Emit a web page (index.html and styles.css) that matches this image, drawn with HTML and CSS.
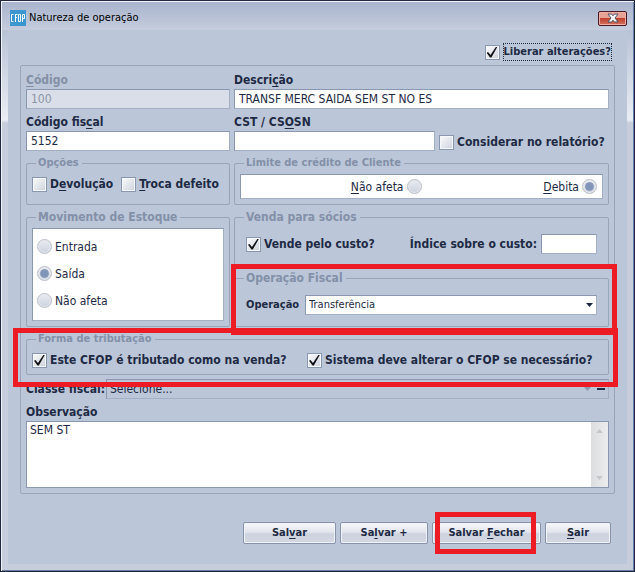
FILE: index.html
```html
<!DOCTYPE html>
<html lang="pt-BR">
<head>
<meta charset="utf-8">
<title>Natureza de operação</title>
<link rel="stylesheet" href="styles.css">
</head>
<body>
<main class="window">
  <header class="titlebar">
    <svg class="app-icon" viewBox="0 0 16 16" aria-hidden="true">
      <rect width="16" height="16" fill="#3b97cf"/>
      <path d="M3.5 4.5H1.5V11.5H3.5M5.5 12V4.5H7.500M5.500 7.500H7M9.500 4.500H10.500V11.500H8.500V4.500ZM12.500 12V4.500H14.500V8.500H12.500" fill="none" stroke="#fff"/>
    </svg>
    <h1 class="title">Natureza de operação</h1>
    <button class="close" type="button" aria-label="Fechar janela">
      <svg viewBox="0 0 12 10" aria-hidden="true">
        <path d="M1 1H4.500L6 2.800L7.500 1H11L8 5L11 9H7.500L6 7.200L4.500 9H1L4 5Z" fill="#fff" stroke="#4d5268"/>
      </svg>
    </button>
  </header>

  <form class="client">
    <div class="unlock">
      <label class="option strong"><input class="tick" type="checkbox" checked><span class="focus">Liberar alterações?</span></label>
    </div>

    <div class="panel">
      <div class="split">
        <div class="field">
          <label class="caption muted" for="codigo"><u>C</u>ódigo</label>
          <input class="text" id="codigo" type="text" value="100" disabled>
        </div>
        <div class="field">
          <label class="caption" for="descricao">Descri<u>ç</u>ão</label>
          <input class="text" id="descricao" type="text" value="TRANSF MERC SAIDA SEM ST NO ES">
        </div>
      </div>

      <div class="split">
        <div class="field">
          <label class="caption" for="fiscal">Código fis<u>c</u>al</label>
          <input class="text" id="fiscal" type="text" value="5152">
        </div>
        <div class="cst">
          <div class="field">
            <label class="caption" for="cst">CST / CS<u>O</u>SN</label>
            <input class="text" id="cst" type="text">
          </div>
          <label class="option strong"><input class="tick" type="checkbox"><span>Considerar no relatório?</span></label>
        </div>
      </div>

      <div class="split">
        <fieldset class="group">
          <legend class="compact">Opções</legend>
          <div class="pair">
            <label class="option strong"><input class="tick" type="checkbox"><span>D<u>e</u>volução</span></label>
            <label class="option strong"><input class="tick" type="checkbox"><span><u>T</u>roca defeito</span></label>
          </div>
        </fieldset>
        <fieldset class="group">
          <legend class="compact">Limite de crédito de Cliente</legend>
          <div class="well credit">
            <label class="option"><span><u>N</u>ão afeta</span><input class="dot" type="radio" name="limite"></label>
            <label class="option"><span><u>D</u>ebita</span><input class="dot" type="radio" name="limite" checked></label>
          </div>
        </fieldset>
      </div>

      <div class="split">
        <fieldset class="group">
          <legend>Movimento de Estoque</legend>
          <div class="well stock">
            <label class="option"><input class="dot" type="radio" name="estoque"><span>Entrada</span></label>
            <label class="option"><input class="dot" type="radio" name="estoque" checked><span>Saída</span></label>
            <label class="option"><input class="dot" type="radio" name="estoque"><span>Não afeta</span></label>
          </div>
        </fieldset>
        <div class="stack">
          <fieldset class="group">
            <legend>Venda para sócios</legend>
            <div class="line">
              <label class="option strong"><input class="tick" type="checkbox" checked><span>Vende pelo custo?</span></label>
              <span class="index">
                <label class="caption" for="indice">Índice sobre o custo:</label>
                <input class="text short" id="indice" type="text">
              </span>
            </div>
          </fieldset>
          <div class="marked mark-operation">
            <fieldset class="group">
              <legend>Operação Fiscal</legend>
              <div class="line">
                <label class="caption small" for="operacao">Operação</label>
                <div class="picker">
                  <select class="text" id="operacao"><option>Transferência</option></select>
                  <svg class="arrow" viewBox="0 0 7 4" aria-hidden="true"><path d="M0 0H7L3.500 4Z"/></svg>
                </div>
              </div>
            </fieldset>
          </div>
        </div>
      </div>

      <div class="marked mark-tax">
        <fieldset class="group">
          <legend class="compact">Forma de tributação</legend>
          <div class="taxes">
            <label class="option strong"><input class="tick" type="checkbox" checked><span>Este CFOP é tributado como na venda?</span></label>
            <label class="option strong"><input class="tick" type="checkbox" checked><span>Sistema deve alterar o CFOP se necessário?</span></label>
          </div>
        </fieldset>
      </div>

      <div class="class-row">
        <label class="caption" for="classe">Classe fiscal:</label>
        <div class="picker flat">
          <select class="text" id="classe"><option>Selecione...</option></select>
          <svg class="arrow" viewBox="0 0 7 4" aria-hidden="true"><path d="M0 0H7L3.500 4Z"/></svg>
          <i class="dash"></i>
        </div>
      </div>

      <div class="field">
        <label class="caption" for="obs">Observação</label>
        <div class="notes">
          <textarea id="obs">SEM ST</textarea>
          <div class="scroll" aria-hidden="true">
            <svg viewBox="0 0 7 4"><path d="M0 4H7L3.500 0Z"/></svg>
            <svg viewBox="0 0 7 4"><path d="M0 0H7L3.500 4Z"/></svg>
          </div>
        </div>
      </div>
    </div>

    <footer class="actions">
      <button class="button" type="button">Sal<u>v</u>ar</button>
      <button class="button" type="button">Sa<u>l</u>var +</button>
      <div class="marked mark-save"><button class="button wide" type="button">Salvar <u>F</u>echar</button></div>
      <button class="button narrow" type="button"><u>S</u>air</button>
    </footer>
  </form>
</main>
</body>
</html>
```

FILE: styles.css
```css
* { box-sizing: border-box; }

body {
  margin: 0;
  color: #1e2a44;
  font: 12px/18px "DejaVu Sans Condensed", "Noto Sans", sans-serif;
}

u { text-underline-offset: 2px; }

.window {
  display: flex;
  flex-direction: column;
  min-height: 100vh;
  padding: 1px 7px 7px;
  border: 1px solid #20263e;
  box-shadow: inset 1px 1px #f4f6fa, inset -1px -1px #6480aa;
  background:
    linear-gradient(#a7b3cc, #c5cddd) top / 100% 29px no-repeat,
    linear-gradient(#b9c3d6 30px, #eaedf4 119px, #c8cddc 122px);
}

.titlebar {
  display: flex;
  align-items: center;
  height: 28px;
  padding: 4px 0 0 2px;
}

.app-icon { width: 16px; height: 16px; }

.title {
  flex: 1;
  margin: 0 0 0 3px;
  color: #000;
  font-size: 11px;
  font-weight: 400;
}

.close {
  display: grid;
  place-items: center;
  width: 29px;
  height: 15px;
  margin: 0;
  padding: 0;
  border: 1px solid #4a1724;
  border-radius: 2px;
  box-shadow: inset 0 0 0 1px #eeb0a5;
  background: linear-gradient(#e7a296 45%, #c0402e 50%, #d4735e);
}

.close svg { width: 12px; height: 10px; }

.client {
  flex: 1;
  padding: 13px 12px 18px;
  background: #bbc7d8;
}

.unlock {
  display: flex;
  justify-content: flex-end;
  margin-bottom: 4px;
  padding-right: 3px;
  font-size: 11px;
}

.focus { outline: 1px dotted #1e2a44; outline-offset: -1px; padding: 0 1px; }

.panel {
  display: flex;
  flex-direction: column;
  gap: 4px;
  padding: 5px;
  border: 1px solid #98a5ba;
  border-radius: 2px;
}

.split {
  display: grid;
  grid-template-columns: 204px 1fr;
  gap: 4px;
}

.field { display: flex; flex-direction: column; }

.caption { font-weight: 700; white-space: nowrap; }
.caption.small { font-size: 11px; }
.muted { color: #8490a6; }

.text {
  width: 100%;
  height: 20px;
  margin: 0;
  padding: 0 4px;
  border: 1px solid #8997b0;
  border-right-color: #a3afc4;
  border-bottom-color: #a3afc4;
  border-radius: 0;
  background: #fff;
  color: #1e2a44;
  font: inherit;
  line-height: 18px;
}

.text:disabled { background: #dadee8; color: #8c95a7; }
.text.short { width: 56px; }

.cst {
  display: grid;
  grid-template-columns: 201px 1fr;
  align-items: end;
  gap: 4px;
}

.option {
  display: flex;
  align-items: center;
  gap: 3px;
  white-space: nowrap;
}

.strong { font-weight: 700; }

.tick, .dot {
  flex: none;
  appearance: none;
  display: grid;
  place-items: center;
  width: 15px;
  height: 15px;
  margin: 0;
  border: 1px solid #8997b0;
  box-shadow: inset 0 0 0 1px #f6f7fa;
  background: linear-gradient(135deg, #fbfcfd, #ccd1de);
}

.tick:checked::before {
  content: "";
  width: 11px;
  height: 11px;
  background: #101014;
  clip-path: polygon(0 56%, 14% 50%, 36% 78%, 88% 0, 100% 0, 44% 100%, 32% 100%);
}

.dot {
  border-color: #b9bec8;
  border-radius: 50%;
  box-shadow: inset 0 0 0 1px #e9ebef;
  background: linear-gradient(#e9ebf0, #ccd3df);
}

.dot:checked::before {
  content: "";
  width: 7px;
  height: 7px;
  border: 1px solid #8a9bbb;
  border-radius: 50%;
  background: #8195b9;
}

.group {
  display: flex;
  flex-direction: column;
  min-width: 0;
  width: 100%;
  margin: 0;
  padding: 3px 5px 5px;
  border: 1px solid #98a5ba;
  border-radius: 2px;
}

.group legend {
  margin-left: 4px;
  padding: 0 3px 0 2px;
  color: #8390a8;
  font-size: 12px;
  font-weight: 700;
  line-height: 16px;
}

.group .compact { font-size: 11px; }

.pair { display: flex; gap: 8px; height: 25px; }
.pair .option { height: 20px; }

.well {
  border: 1px solid #8997b0;
  border-right-color: #a3afc4;
  border-bottom-color: #a3afc4;
  background: #fff;
}

.credit {
  display: grid;
  grid-template-columns: 1fr 1fr;
  height: 25px;
  padding: 0 5px;
}

.credit .option { justify-content: flex-end; }

.stock {
  display: flex;
  flex-direction: column;
  justify-content: space-around;
  height: 93px;
  padding: 4px 4px 6px;
}

.stack { display: flex; flex-direction: column; gap: 4px; }

.line {
  display: flex;
  align-items: center;
  justify-content: space-between;
  gap: 6px;
  height: 32px;
  padding: 0 6px;
}

.index { display: flex; align-items: center; gap: 4px; }

.picker { position: relative; flex: 1; display: flex; }
.picker .text { appearance: none; padding-left: 3px; font-size: 11px; }

.arrow {
  position: absolute;
  top: 8px;
  right: 4px;
  width: 7px;
  height: 4px;
  fill: #1e2a44;
}

.flat .text { background: transparent; font-size: 12px; }
.flat .arrow { right: 18px; fill: #8d9ab1; }

.dash {
  position: absolute;
  top: 9px;
  right: 4px;
  width: 8px;
  height: 2px;
  background: #1e2a44;
}

.taxes {
  display: grid;
  grid-template-columns: 271px 1fr;
  gap: 4px;
  height: 18px;
  margin-top: 1px;
}

.class-row { display: flex; align-items: center; gap: 1px; }

.notes {
  display: flex;
  height: 67px;
  border: 1px solid #8997b0;
  background: #fff;
}

.notes textarea {
  flex: 1;
  margin: 0;
  padding: 0 3px;
  border: 0;
  outline: 0;
  resize: none;
  background: #fff;
  color: #1e2a44;
  font: inherit;
  line-height: 16px;
}

.scroll {
  display: flex;
  flex-direction: column;
  align-items: center;
  justify-content: space-between;
  width: 17px;
  padding: 7px 0;
  background: linear-gradient(90deg, #dcdde0, #ececee);
}

.scroll svg { width: 7px; height: 4px; fill: #c4c6cb; }

.actions {
  display: flex;
  justify-content: flex-end;
  gap: 4px;
  margin-top: 28px;
  padding-right: 4px;
}

.button {
  width: 93px;
  height: 22px;
  margin: 0;
  padding: 0;
  border: 1px solid #8794ac;
  border-radius: 2px;
  box-shadow: inset 0 0 0 1px #f0f2f6;
  background: linear-gradient(#f7f8fa, #e2e5ec 45%, #cdd2df 55%, #d3d8e3);
  color: #1e2a44;
  font: inherit;
  font-size: 11px;
  font-weight: 700;
}

.button + .button { width: 88px; }
.button.wide { width: 109px; }
.actions .narrow { width: 66px; }

/* Red frames that call out parts of the form */
.marked { position: relative; }

.marked::after {
  content: "";
  position: absolute;
  z-index: 1;
  border: 5px solid #ed1c24;
  pointer-events: none;
}

.mark-operation::after { inset: -6px -8px -8px -3px; }
.mark-tax::after { inset: -3px -9px -12px -13px; }
.mark-save::after { inset: -10px 5px -10px 3px; }
```
